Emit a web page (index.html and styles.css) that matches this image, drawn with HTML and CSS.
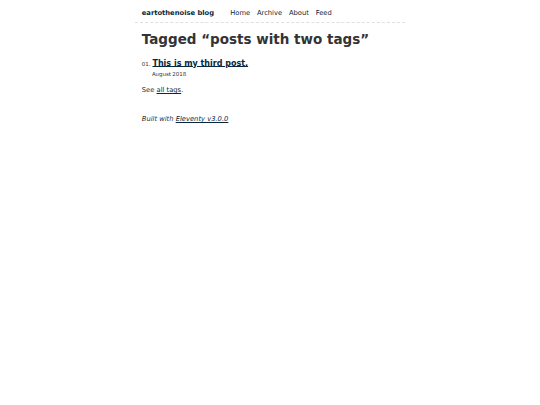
FILE: index.html
```
<!doctype html>
<html lang="en">
<head>
<meta charset="utf-8">
<title>Tagged “posts with two tags”</title>
<link rel="stylesheet" href="styles.css">
</head>
<body>
<header class="site-header">
  <a href="#" class="home-link">eartothenoise blog</a>
  <nav>
    <ul class="nav">
      <li class="nav-item"><a href="#">Home</a></li>
      <li class="nav-item"><a href="#">Archive</a></li>
      <li class="nav-item"><a href="#">About</a></li>
      <li class="nav-item"><a href="#">Feed</a></li>
    </ul>
  </nav>
</header>
<main class="main">
  <h1 class="title">Tagged “posts with two tags”</h1>
  <ol class="postlist">
    <li class="postlist-item">
      <span class="postlist-num">01.</span>
      <a href="#" class="postlist-link">This is my third post.</a>
      <span class="postlist-date">August 2018</span>
    </li>
  </ol>
  <p class="text">See <a href="#" class="link">all tags</a>.</p>
</main>
<footer class="footer">
  <p class="text"><em>Built with <a href="#" class="link">Eleventy v3.0.0</a></em></p>
</footer>
</body>
</html>
```
FILE: styles.css
```
html {
  font-size: 6.75px;
}
html, body {
  margin: 0 auto;
  padding: 0;
  font-family: "DejaVu Sans", sans-serif;
  color: #333;
  background: #fff;
}
body {
  max-width: 40em;
}
a[href] {
  color: #082840;
}
.site-header {
  display: flex;
  gap: 1em;
  flex-wrap: wrap;
  align-items: center;
  padding: 1.3em 1em 0.6em;
  border-bottom: 1px dashed #e0e0e0;
}
.home-link {
  font-weight: 700;
  font-size: 1em;
  margin-right: 1.4em;
}
a.home-link {
  text-decoration: none;
}
.nav {
  display: flex;
  gap: .5em 1em;
  padding: 0;
  margin: 0;
  list-style: none;
}
.nav-item {
  display: inline-block;
  line-height: 1.3;
}
.nav-item a[href] {
  text-decoration: none;
}
.main, .footer {
  padding: 1rem;
}
.main {
  padding-top: 1.3rem;
}
.title {
  font-size: 2em;
  margin: 0 0 0.8em;
}
.postlist {
  list-style: none;
  padding: 0 0 0 1.5rem;
  margin: 1em 0;
}
.postlist-item {
  display: flex;
  flex-wrap: wrap;
  align-items: baseline;
  margin-bottom: 1em;
  line-height: 1.5;
}
.postlist-num {
  display: inline-block;
  line-height: 100%;
  text-align: right;
  margin-left: -1.5rem;
  font-size: 0.8125em;
  color: #333;
}
.postlist-date {
  font-size: 0.8125em;
  color: #333;
  word-spacing: -0.5px;
}
.postlist-link {
  font-size: 1.1875em;
  font-weight: 700;
  flex-basis: calc(100% - 1.5rem);
  padding-left: .25em;
  padding-right: .5em;
  text-underline-position: from-font;
  text-underline-offset: 0;
  text-decoration-thickness: 1px;
}
.text {
  line-height: 1.5;
  margin: 0.85em 0 0;
}
.footer .text {
  margin-top: 0.85em;
}
```
